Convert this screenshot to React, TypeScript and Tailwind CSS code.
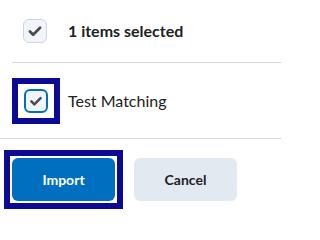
import React from 'react';

function CheckMark() {
  return (
    <svg viewBox="0 0 24 24" className="w-full h-full" fill="none">
      <path d="M6.5 12.5 L10 16 L17.5 8.5" stroke="#494c4e" strokeWidth="3" strokeLinecap="round" strokeLinejoin="round" />
    </svg>
  );
}

function Checkbox({ focused }: { focused?: boolean }) {
  return (
    <div
      className={
        focused
          ? "w-[24px] h-[24px] rounded-[6px] border-2 border-[#006fbf] bg-[#f1f5fb]"
          : "w-[24px] h-[24px] rounded-[6px] border border-[#cdd5dc] bg-[#f1f5fb]"
      }
    >
      <CheckMark />
    </div>
  );
}

export default function App() {
  return (
    <div className="w-[281px] h-[209px] bg-white overflow-hidden font-['Lato','Liberation_Sans',sans-serif] text-[#202122]">
      {/* selection summary */}
      <div className="pl-[12px]">
        <div className="flex items-center h-[63px] border-b border-[#d3d9e3] pl-[11px] pb-[1px]">
          <Checkbox />
          <span className="ml-[21px] text-[16px] font-bold">1 items selected</span>
        </div>
      </div>

      {/* item row */}
      <div className="flex items-center h-[76px] border-b border-[#d3d9e3] pl-[12px]">
        <div className="w-[48px] h-[46px] border-[6px] border-[#0c0a92] flex items-center justify-center">
          <Checkbox focused />
        </div>
        <span className="ml-[8px] text-[16px]">Test Matching</span>
      </div>

      {/* actions */}
      <div className="flex items-center pl-[4px] pt-[11px]">
        <div className="border-[6px] border-[#0c0a92] p-[2px]">
          <button className="w-[103px] h-[43px] rounded-[6px] bg-[#006fbf] text-white text-[14px] font-bold">
            Import
          </button>
        </div>
        <button className="ml-[11px] w-[103px] h-[43px] rounded-[6px] bg-[#e3e9f1] text-[#202122] text-[14px] font-bold">
          Cancel
        </button>
      </div>
    </div>
  );
}
